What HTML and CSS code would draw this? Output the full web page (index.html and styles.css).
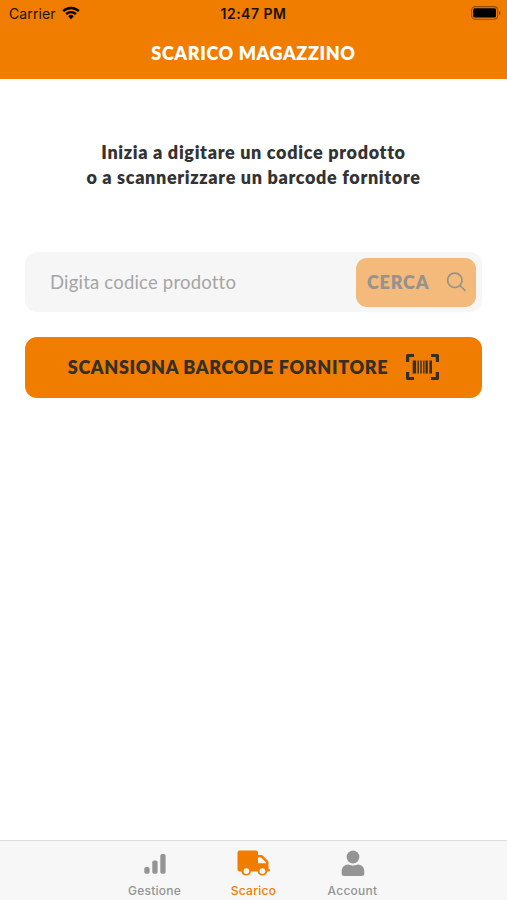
FILE: index.html
```html
<!DOCTYPE html>
<html lang="it">
<head>
<meta charset="utf-8">
<title>Scarico Magazzino</title>
<link rel="stylesheet" href="styles.css">
</head>
<body>
<header class="header">
  <div class="status">
    <div class="carrier"><span>Carrier</span>
      <svg width="18" height="14" viewBox="0 0 18 14"><path d="M.3 4.200a12.400 12.400 0 0 1 17.400 0l-1.700 1.800a10 10 0 0 0-14 0zM3.300 7.300a8.100 8.100 0 0 1 11.400 0L13 9a5.700 5.700 0 0 0-8 0zM6.200 10.200a4 4 0 0 1 5.600 0L9 13.200z"/></svg>
    </div>
    <div class="clock">12:47 PM</div>
    <svg class="battery" width="30" height="14" viewBox="0 0 30 14"><rect x=".6" y=".6" width="26" height="12.600" rx="3.500" fill="none" stroke="#000" stroke-opacity=".4" stroke-width="1.100"/><rect x="2.200" y="2.300" width="22.800" height="9.200" rx="1.500"/><path d="M28 5v4q1.500-.6 1.500-2T28 5z" opacity=".45"/></svg>
  </div>
  <h1 class="title">SCARICO MAGAZZINO</h1>
</header>
<main class="main">
  <p class="intro"><span class="line-one">Inizia a digitare un codice prodotto</span><br><span class="line-two">o a scannerizzare un barcode fornitore</span></p>
  <div class="search">
    <span class="placeholder">Digita codice prodotto</span>
    <button class="search-button"><span>CERCA</span>
      <svg width="20" height="20" viewBox="0 0 20 20" fill="none" stroke="currentColor" stroke-width="1.700" stroke-linecap="round"><circle cx="8.800" cy="8.300" r="7.200"/><path d="M14 13.500l5 5"/></svg>
    </button>
  </div>
  <button class="scan-button"><span>SCANSIONA BARCODE FORNITORE</span>
    <svg width="33" height="26" viewBox="0 0 33 26" fill="currentColor"><path d="M0 8V1.500Q0 0 1.500 0H8v3H3.200v5zM25 0h6.500Q33 0 33 1.500V8h-3.200V3H25zM0 18h3.200v5H8v3H1.500Q0 26 0 24.500zM29.800 18H33v6.500q0 1.500-1.500 1.500H25v-3h4.800z"/><path d="M6.700 6.500h3.400v13H6.700zM11.500 6.500h1.400v13h-1.400zM14.300 6.500h1.400v13h-1.400zM17.100 6.500h1.400v13h-1.400zM19.500 6.500h2.300v13h-2.300zM23.400 6.500H26v13h-2.600z"/></svg>
  </button>
</main>
<nav class="tabs">
  <a class="tab"><svg width="34" height="28" viewBox="0 0 34 28" fill="currentColor"><rect x="6.300" y="18" width="5.300" height="6.800" rx="1.800"/><rect x="14.300" y="11.500" width="5.300" height="13.300" rx="1.800"/><rect x="22.300" y="5" width="5.300" height="19.800" rx="1.800"/></svg><span>Gestione</span></a>
  <a class="tab active"><svg width="34" height="28" viewBox="0 0 34 28" fill="currentColor"><path fill-rule="evenodd" d="M2.500 1.500h16.500Q21 1.500 21 3.500V6h3.200q.9 0 1.500.6l5.200 5.200q.6.600.6 1.500v6.600h.6q.8 0 .8.800v1q0 .8-.8.800h-1.800a5 5 0 0 1-9.800 0h-6.400a5 5 0 0 1-9.800 0H2.500q-2-.1-2-2V3.500Q.5 1.500 2.500 1.500zM21 8.400v5.900h8.100v-.9l-5-5zM9.400 19.200a2.900 2.900 0 1 0 0 5.800 2.900 2.900 0 0 0 0-5.800zM25.400 19.200a2.900 2.900 0 1 0 0 5.800 2.900 2.900 0 0 0 0-5.800z"/></svg><span>Scarico</span></a>
  <a class="tab"><svg width="34" height="28" viewBox="0 0 34 28" fill="currentColor"><circle cx="17" cy="8" r="6.400"/><path d="M12.300 15.500q4.700 2 9.400 0c4.200 0 6.600 3 6.600 7v2q0 2.500-2.500 2.500H8.200q-2.500 0-2.500-2.500v-2c0-4 2.400-7 6.600-7z"/></svg><span>Account</span></a>
</nav>
</body>
</html>
```
FILE: styles.css
```css
* { box-sizing: border-box; }
body {
  margin: 0;
  height: 900px;
  display: flex;
  flex-direction: column;
  background: #fff;
  color: #333;
  font-family: Lato, sans-serif;
  font-variant-ligatures: none;
  overflow: hidden;
}
svg { display: block; flex: none; }
button { border: 0; margin: 0; font: inherit; color: inherit; }
.header { height: 79px; background: #f07d00; }
.status {
  height: 27px;
  padding: 0 6px 0 9px;
  display: grid;
  grid-template-columns: 1fr auto 1fr;
  align-items: center;
  font: 14px/27px Inter, sans-serif;
  color: #1c1000;
}
.carrier { display: flex; align-items: center; gap: 6px; letter-spacing: .1px; }
.carrier svg { fill: #000; margin-top: -2px; }
.clock { font-weight: 600; letter-spacing: .5px; margin-left: -3px; }
.battery { justify-self: end; margin-top: -1px; }
.title {
  margin: 0;
  text-align: center;
  color: #fff;
  font-size: 18px;
  font-weight: 800;
  line-height: 53px;
  letter-spacing: .62px;
}
.main { flex: 1; padding: 61px 25px 0; }
.intro {
  margin: 0 0 62px;
  text-align: center;
  font-size: 18px;
  font-weight: 800;
  line-height: 25px;
}
.line-one { letter-spacing: .66px; }
.line-two { letter-spacing: .65px; }
.search {
  height: 60px;
  padding: 0 6px 0 25px;
  display: flex;
  align-items: center;
  justify-content: space-between;
  background: #f6f6f6;
  border-radius: 12px;
}
.placeholder { color: #a5a5a5; font-size: 18.5px; letter-spacing: .2px; }
.search-button {
  width: 120px;
  height: 49px;
  padding: 0 10px 0 11px;
  display: flex;
  align-items: center;
  justify-content: space-between;
  border-radius: 11px;
  background: #f3ba7b;
  color: #96928d;
  font-size: 18px;
  font-weight: 800;
  letter-spacing: .8px;
}
.scan-button {
  width: 100%;
  height: 61px;
  margin-top: 25px;
  padding: 0;
  display: flex;
  align-items: center;
  justify-content: center;
  gap: 18px;
  border-radius: 12px;
  background: #f07d00;
  color: #333029;
  font-size: 18px;
  font-weight: 800;
  letter-spacing: .63px;
}
.scan-button span, .search-button span { margin-top: -1px; }
.scan-button svg { margin-top: -1px; }
.tabs {
  height: 60px;
  padding: 0 105px;
  display: grid;
  grid-template-columns: repeat(3, 1fr);
  background: #f7f7f7;
  border-top: 1px solid #ddd;
}
.tab {
  display: flex;
  flex-direction: column;
  align-items: center;
  padding-top: 8px;
  color: #949494;
  font: 500 12px/16px Inter, sans-serif;
  letter-spacing: .25px;
}
.tab span { margin-top: 6px; }
.active { color: #f07d00; }
```
